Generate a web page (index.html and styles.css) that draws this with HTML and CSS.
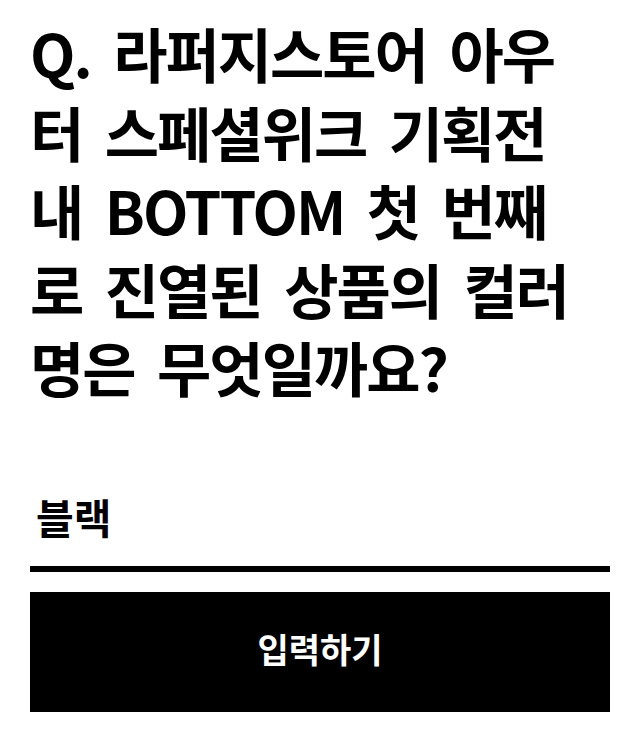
FILE: index.html
```html
<!DOCTYPE html>
<html lang="ko">
  <head>
    <meta charset="utf-8" />
    <title>퀴즈</title>
    <link rel="stylesheet" href="styles.css">
  </head>
  <body>
    <div class="quiz">
      <h1 class="question">Q. 라퍼지스토어 아우<br />터 스페셜위크 기획전<br />내 BOTTOM 첫 번째<br />로 진열된 상품의 컬러<br />명은 무엇일까요?</h1>
      <form class="answer">
        <input class="answer-input" type="text" value="블랙" />
        <button class="answer-btn" type="button">입력하기</button>
      </form>
    </div>
  </body>
</html>
```

FILE: styles.css
```css
body { margin: 0; background-color: white; color: black; font-family: "Noto Sans CJK KR", sans-serif; }
.quiz { padding: 14px 30px 0 30px; }
.question { margin: 0; font-size: 59px; line-height: 78.5px; font-weight: 700; letter-spacing: -2px; word-spacing: 8px; white-space: nowrap; }
.answer { margin-top: 79px; display: flex; flex-direction: column; }
.answer-input { border: none; border-bottom: 6px solid black; padding: 0 0 20px 6px; font-family: inherit; font-size: 41px; font-weight: 700; color: black; outline: none; }
.answer-btn { margin-top: 20px; height: 120px; padding-bottom: 8px; border: none; background-color: black; color: white; font-family: inherit; font-size: 34px; font-weight: 700; }
```
